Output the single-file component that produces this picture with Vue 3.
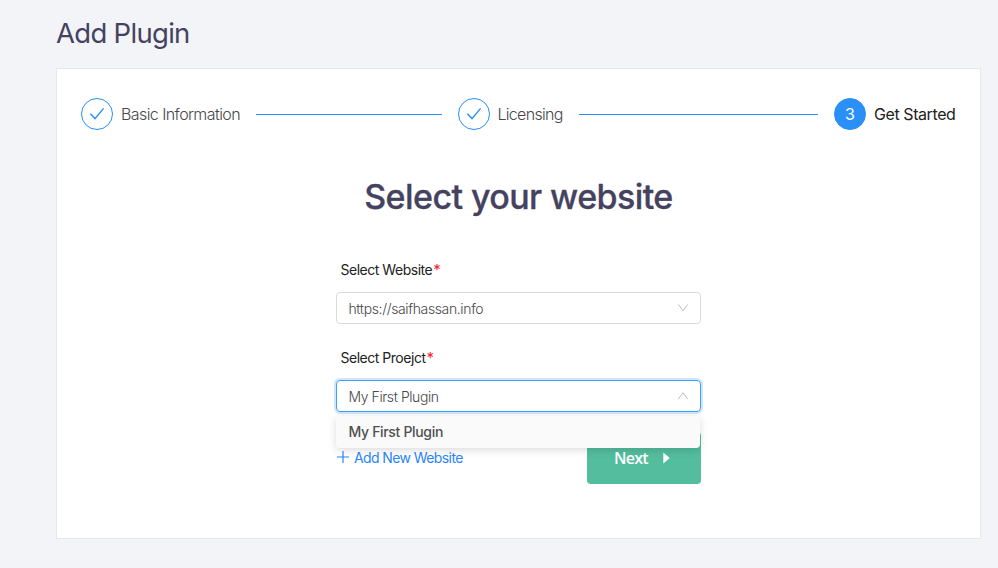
<script setup>
import { ref } from 'vue'

const steps = ref([
  { title: 'Basic Information', status: 'finish' },
  { title: 'Licensing', status: 'finish' },
  { title: 'Get Started', status: 'process' }
])

const website = ref('https://saifhassan.info')
const project = ref('My First Plugin')
const projectList = ref(['My First Plugin'])
const isOpen = ref(true)

const selectProject = (item) => {
  project.value = item
  isOpen.value = false
}
</script>

<template>
  <div class="page">
    <h1 class="page-title">Add Plugin</h1>

    <div class="card">
      <div class="steps">
        <div
          v-for="(step, index) in steps"
          :key="step.title"
          class="step"
          :class="[ 'step-' + step.status, 'step-no-' + (index + 1) ]"
        >
          <span class="step-icon">
            <svg v-if="step.status === 'finish'" width="16" height="16" viewBox="0 0 16 16">
              <path d="M1.4 7.8 L6 12.6 L14.6 2.4" fill="none" stroke="currentColor" stroke-width="1.4" />
            </svg>
            <template v-else>{{ index + 1 }}</template>
          </span>
          <span class="step-title">{{ step.title }}</span>
          <span v-if="index < steps.length - 1" class="step-line"></span>
        </div>
      </div>

      <h2 class="heading">Select your website</h2>

      <div class="form">
        <label class="label">Select Website<span class="required">*</span></label>
        <div class="select">
          <span class="value value-website">{{ website }}</span>
          <svg class="arrow" width="12" height="12" viewBox="0 0 12 12">
            <path d="M1.3 2.4 L6 8.9 L10.7 2.4" fill="none" stroke="currentColor" />
          </svg>
        </div>

        <label class="label">Select Proejct<span class="required">*</span></label>
        <div class="select" :class="{ 'select-open': isOpen }" @click="isOpen = !isOpen">
          <span class="value">{{ project }}</span>
          <svg class="arrow" width="12" height="12" viewBox="0 0 12 12">
            <path d="M1.3 9.2 L6 2.7 L10.7 9.2" fill="none" stroke="currentColor" />
          </svg>
          <div v-if="isOpen" class="dropdown">
            <div
              v-for="item in projectList"
              :key="item"
              class="option"
              @click.stop="selectProject(item)"
            >
              {{ item }}
            </div>
          </div>
        </div>

        <div class="actions">
          <a class="add-link">
            <svg width="14" height="14" viewBox="0 0 14 14">
              <path d="M7 1 V13 M1 7 H13" fill="none" stroke="currentColor" stroke-width="1.2" />
            </svg>
            <span class="add-text">Add New Website</span>
          </a>
          <button class="next">
            <span class="next-text">Next</span>
            <svg width="7" height="12" viewBox="0 0 7 12">
              <path d="M0.3 0.5 L6.7 6 L0.3 11.5 Z" fill="#fff" />
            </svg>
          </button>
        </div>
      </div>
    </div>
  </div>
</template>

<style>
body{
  background-color: #f3f4f8;
}
</style>

<style scoped>
.page{
  box-sizing: border-box;
  height: 568px;
  padding: 15px 17px 0 56px;

  background-color: #f3f4f8;
  font-family: Inter, "Liberation Sans", sans-serif;
  font-size: 14px;
  white-space: nowrap;
}

.page-title{
  height: 36px;
  line-height: 36px;
  margin: 0 0 17px;

  color: #454260;
  font-size: 27.5px;
  font-weight: 400;
  letter-spacing: -0.7px;
}

.card{
  box-sizing: border-box;
  height: 471px;
  padding: 29px 24px 0;
  border: 1px solid #e8e8e8;

  background-color: #fff;
}

.steps{
  display: flex;
  gap: 16px;
}

.step{
  display: flex;
  align-items: center;
  flex: 1;
}

.step-process{
  flex: none;
}

.step-icon{
  display: flex;
  align-items: center;
  justify-content: center;
  box-sizing: border-box;
  width: 32px;
  height: 32px;
  margin-right: 8px;
  border: 1px solid #2a8ff7;
  border-radius: 50%;

  color: #2a8ff7;
  font-size: 16px;
}

.step-process .step-icon{
  background-color: #2a8ff7;
  color: #fff;
}

.step-title{
  color: #484848;
  font-size: 16px;
  font-weight: 300;
}

.step-no-1 .step-title{
  width: 119px;
  letter-spacing: -0.58px;
}

.step-no-2 .step-title{
  width: 65px;
  letter-spacing: -0.7px;
}

.step-process .step-title{
  width: 82px;
  color: #222;
  font-weight: 400;
  letter-spacing: -0.42px;
}

.step-line{
  flex: 1;
  height: 1px;
  margin-left: 16px;

  background-color: #2a8ff7;
}

.heading{
  height: 48px;
  line-height: 48px;
  margin: 43px 0 0;

  color: #454260;
  font-size: 34px;
  font-weight: 500;
  letter-spacing: -0.58px;
  text-align: center;
  -webkit-text-stroke: 0.3px #454260;
}

.form{
  display: flex;
  flex-direction: column;
  width: 365px;
  margin: 39px auto 0;
}

.label{
  height: 20px;
  line-height: 20px;
  margin: 0 0 12px 4.5px;

  color: #222;
  letter-spacing: -0.48px;
}

.required{
  margin-left: 1px;
  color: #f5222d;
  font-size: 15px;
}

.select{
  position: relative;
  display: flex;
  align-items: center;
  justify-content: space-between;
  box-sizing: border-box;
  height: 32px;
  padding: 0 11px;
  margin-bottom: 24px;
  border: 1px solid #d9d9d9;
  border-radius: 4px;

  color: #484848;
  cursor: pointer;
}

.select-open{
  border-color: #40a0f8;
  box-shadow: 0 0 0 2px #cfe7fd;
}

.value{
  margin-left: 0.5px;
  font-weight: 300;
  letter-spacing: -0.43px;
}

.value-website{
  letter-spacing: -0.37px;
}

.arrow{
  color: #bfbfbf;
}

.dropdown{
  position: absolute;
  top: 35px;
  left: -1px;
  z-index: 10;
  width: 364px;
  overflow: hidden;
  box-shadow: 0 2px 8px rgba(0, 0, 0, 0.15);
  border-radius: 4px;
}

.option{
  height: 32px;
  line-height: 32px;
  padding: 0 12.5px;

  background-color: #fafafa;
  color: #505050;
  font-weight: 500;
  letter-spacing: -0.33px;
}

.actions{
  display: flex;
  align-items: flex-start;
  justify-content: space-between;
  margin-top: -4px;
}

.add-link{
  display: flex;
  align-items: center;
  gap: 4px;
  height: 20px;
  margin-top: 15px;

  color: #2a85fa;
}

.add-text{
  letter-spacing: -0.6px;
}

.next{
  display: flex;
  align-items: center;
  box-sizing: border-box;
  width: 114px;
  height: 52px;
  padding: 0 0 0 27px;
  border: none;
  border-radius: 4px;

  background-color: #54bd9e;
  color: #fff;
  font-family: "Open Sans", "Noto Sans", sans-serif;
  font-size: 16px;
  font-weight: 600;
  letter-spacing: -0.8px;
}

.next-text{
  width: 49px;
  text-align: left;
}
</style>
